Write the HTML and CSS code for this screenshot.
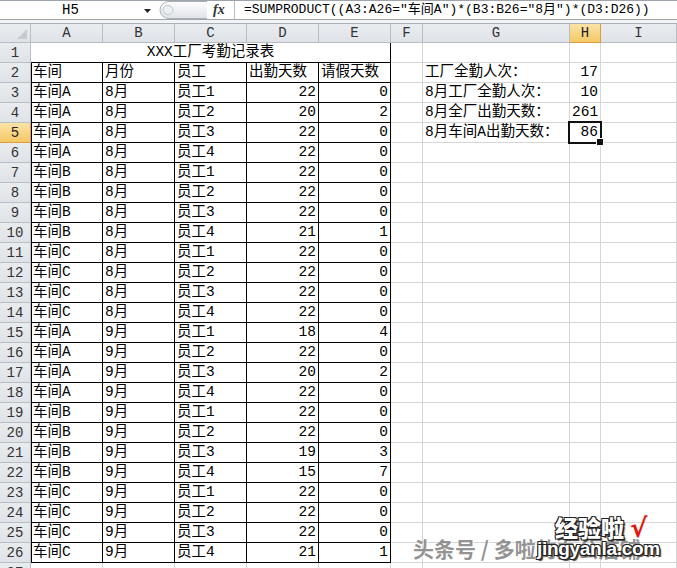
FILE: index.html
```html
<!DOCTYPE html>
<html lang="zh-CN">
<head>
<meta charset="utf-8">
<title>XXX工厂考勤记录表</title>
<link rel="stylesheet" href="styles.css">
</head>
<body>
<div class="fbar">
  <div class="namebox">H5</div>
  <svg class="nb-arrow" width="8" height="5" viewBox="0 0 8 5"><path d="M0 0H7L3.5 4Z" fill="#222"/></svg>
  <svg class="knob" width="50" height="18" viewBox="0 0 50 18">
    <defs><linearGradient id="kg" x1="0" y1="0" x2="0" y2="1"><stop offset="0" stop-color="#fdfdfe"/><stop offset="1" stop-color="#dfe3e8"/></linearGradient></defs>
    <path d="M50 0.5H12A9 8.5 0 0 0 12 17.5H50" fill="url(#kg)" stroke="#a9b0b8"/>
    <ellipse cx="11" cy="9" rx="5" ry="4.5" fill="#eceff2" stroke="#c3c8ce"/>
  </svg>
  <div class="fx">fx</div>
  <div class="formula">=SUMPRODUCT((A3:A26=″车间A″)*(B3:B26=″8月″)*(D3:D26))</div>
</div>
<div class="gap"></div>
<div class="sheet">
  <div class="corner"><span class="tri"></span></div>
  <div class="ch">A</div><div class="ch">B</div><div class="ch">C</div><div class="ch">D</div><div class="ch">E</div><div class="ch">F</div><div class="ch">G</div><div class="ch sel">H</div><div class="ch">I</div>

  <div class="rh">1</div><div class="c title">XXX工厂考勤记录表</div><div class="c"></div><div class="c"></div><div class="c"></div><div class="c"></div>
  <div class="rh">2</div><div class="c b bl">车间</div><div class="c b">月份</div><div class="c b">员工</div><div class="c b">出勤天数</div><div class="c b">请假天数</div><div class="c"></div><div class="c">工厂全勤人次：</div><div class="c n">17</div><div class="c"></div>
  <div class="rh">3</div><div class="c b bl">车间A</div><div class="c b">8月</div><div class="c b">员工1</div><div class="c b n">22</div><div class="c b n">0</div><div class="c"></div><div class="c">8月工厂全勤人次：</div><div class="c n">10</div><div class="c"></div>
  <div class="rh">4</div><div class="c b bl">车间A</div><div class="c b">8月</div><div class="c b">员工2</div><div class="c b n">20</div><div class="c b n">2</div><div class="c"></div><div class="c">8月全厂出勤天数：</div><div class="c n">261</div><div class="c"></div>
  <div class="rh sel">5</div><div class="c b bl">车间A</div><div class="c b">8月</div><div class="c b">员工3</div><div class="c b n">22</div><div class="c b n">0</div><div class="c"></div><div class="c">8月车间A出勤天数：</div><div class="c n active">86</div><div class="c"></div>
  <div class="rh">6</div><div class="c b bl">车间A</div><div class="c b">8月</div><div class="c b">员工4</div><div class="c b n">22</div><div class="c b n">0</div><div class="c"></div><div class="c"></div><div class="c"></div><div class="c"></div>
  <div class="rh">7</div><div class="c b bl">车间B</div><div class="c b">8月</div><div class="c b">员工1</div><div class="c b n">22</div><div class="c b n">0</div><div class="c"></div><div class="c"></div><div class="c"></div><div class="c"></div>
  <div class="rh">8</div><div class="c b bl">车间B</div><div class="c b">8月</div><div class="c b">员工2</div><div class="c b n">22</div><div class="c b n">0</div><div class="c"></div><div class="c"></div><div class="c"></div><div class="c"></div>
  <div class="rh">9</div><div class="c b bl">车间B</div><div class="c b">8月</div><div class="c b">员工3</div><div class="c b n">22</div><div class="c b n">0</div><div class="c"></div><div class="c"></div><div class="c"></div><div class="c"></div>
  <div class="rh">10</div><div class="c b bl">车间B</div><div class="c b">8月</div><div class="c b">员工4</div><div class="c b n">21</div><div class="c b n">1</div><div class="c"></div><div class="c"></div><div class="c"></div><div class="c"></div>
  <div class="rh">11</div><div class="c b bl">车间C</div><div class="c b">8月</div><div class="c b">员工1</div><div class="c b n">22</div><div class="c b n">0</div><div class="c"></div><div class="c"></div><div class="c"></div><div class="c"></div>
  <div class="rh">12</div><div class="c b bl">车间C</div><div class="c b">8月</div><div class="c b">员工2</div><div class="c b n">22</div><div class="c b n">0</div><div class="c"></div><div class="c"></div><div class="c"></div><div class="c"></div>
  <div class="rh">13</div><div class="c b bl">车间C</div><div class="c b">8月</div><div class="c b">员工3</div><div class="c b n">22</div><div class="c b n">0</div><div class="c"></div><div class="c"></div><div class="c"></div><div class="c"></div>
  <div class="rh">14</div><div class="c b bl">车间C</div><div class="c b">8月</div><div class="c b">员工4</div><div class="c b n">22</div><div class="c b n">0</div><div class="c"></div><div class="c"></div><div class="c"></div><div class="c"></div>
  <div class="rh">15</div><div class="c b bl">车间A</div><div class="c b">9月</div><div class="c b">员工1</div><div class="c b n">18</div><div class="c b n">4</div><div class="c"></div><div class="c"></div><div class="c"></div><div class="c"></div>
  <div class="rh">16</div><div class="c b bl">车间A</div><div class="c b">9月</div><div class="c b">员工2</div><div class="c b n">22</div><div class="c b n">0</div><div class="c"></div><div class="c"></div><div class="c"></div><div class="c"></div>
  <div class="rh">17</div><div class="c b bl">车间A</div><div class="c b">9月</div><div class="c b">员工3</div><div class="c b n">20</div><div class="c b n">2</div><div class="c"></div><div class="c"></div><div class="c"></div><div class="c"></div>
  <div class="rh">18</div><div class="c b bl">车间A</div><div class="c b">9月</div><div class="c b">员工4</div><div class="c b n">22</div><div class="c b n">0</div><div class="c"></div><div class="c"></div><div class="c"></div><div class="c"></div>
  <div class="rh">19</div><div class="c b bl">车间B</div><div class="c b">9月</div><div class="c b">员工1</div><div class="c b n">22</div><div class="c b n">0</div><div class="c"></div><div class="c"></div><div class="c"></div><div class="c"></div>
  <div class="rh">20</div><div class="c b bl">车间B</div><div class="c b">9月</div><div class="c b">员工2</div><div class="c b n">22</div><div class="c b n">0</div><div class="c"></div><div class="c"></div><div class="c"></div><div class="c"></div>
  <div class="rh">21</div><div class="c b bl">车间B</div><div class="c b">9月</div><div class="c b">员工3</div><div class="c b n">19</div><div class="c b n">3</div><div class="c"></div><div class="c"></div><div class="c"></div><div class="c"></div>
  <div class="rh">22</div><div class="c b bl">车间B</div><div class="c b">9月</div><div class="c b">员工4</div><div class="c b n">15</div><div class="c b n">7</div><div class="c"></div><div class="c"></div><div class="c"></div><div class="c"></div>
  <div class="rh">23</div><div class="c b bl">车间C</div><div class="c b">9月</div><div class="c b">员工1</div><div class="c b n">22</div><div class="c b n">0</div><div class="c"></div><div class="c"></div><div class="c"></div><div class="c"></div>
  <div class="rh">24</div><div class="c b bl">车间C</div><div class="c b">9月</div><div class="c b">员工2</div><div class="c b n">22</div><div class="c b n">0</div><div class="c"></div><div class="c"></div><div class="c"></div><div class="c"></div>
  <div class="rh">25</div><div class="c b bl">车间C</div><div class="c b">9月</div><div class="c b">员工3</div><div class="c b n">22</div><div class="c b n">0</div><div class="c"></div><div class="c"></div><div class="c"></div><div class="c"></div>
  <div class="rh">26</div><div class="c b bl">车间C</div><div class="c b">9月</div><div class="c b">员工4</div><div class="c b n">21</div><div class="c b n">1</div><div class="c"></div><div class="c"></div><div class="c"></div><div class="c"></div>
  <div class="rh">27</div><div class="c"></div><div class="c"></div><div class="c"></div><div class="c"></div><div class="c"></div><div class="c"></div><div class="c"></div><div class="c"></div><div class="c"></div>
</div>
<div class="watermark">
  <div class="wm-gray">头条号 / 多啦的办公店铺</div>
  <div class="wm-logo">经验啦<span class="wm-check">√</span></div>
  <div class="wm-url">jingyanla.com</div>
</div>
</body>
</html>
```
FILE: styles.css
```css
* { box-sizing: border-box; }
html, body { margin: 0; padding: 0; background: #fff; }
body {
  width: 677px;
  height: 568px;
  overflow: hidden;
  position: relative;
  font-family: "Liberation Mono", "Noto Sans CJK SC", monospace;
  color: #000;
}

/* formula bar */
.fbar {
  display: flex;
  align-items: center;
  height: 20px;
  border-top: 1px solid #9ea4ab;
  border-bottom: 1px solid #9ea4ab;
  background: #fff;
}
.namebox {
  width: 141px;
  text-align: center;
  font-size: 14px;
  line-height: 18px;
}
.nb-arrow { margin-left: 3px; margin-top: 2px; }
.knob { margin-left: 5px; align-self: flex-start; }
.fx {
  width: 28px;
  height: 18px;
  padding-left: 6px;
  font-family: "Liberation Serif", serif;
  font-style: italic;
  font-weight: bold;
  font-size: 14px;
  line-height: 18px;
  color: #333;
  border-right: 1px solid #b7bcc2;
}
.formula {
  padding-left: 9px;
  font-size: 13px;
  line-height: 18px;
  white-space: nowrap;
}
.gap { height: 3px; background: #f2f3f5; }

/* sheet */
.sheet {
  display: grid;
  grid-template-columns: 31px 72px 72px 72px 72px 72px 32px 147px 31px 76px;
  grid-template-rows: 19px;
  grid-auto-rows: 20px;
  border-top: 1px solid #aab0b7;
}
.corner, .ch, .rh {
  background: linear-gradient(#e9ecef, #dfe3e7);
  border-right: 1px solid #b9bec4;
  border-bottom: 1px solid #b9bec4;
  color: #333;
  font-size: 14px;
  text-align: center;
}
.ch { line-height: 18px; }
.rh { line-height: 20px; font-size: 14px; }
.corner { position: relative; }
.tri {
  position: absolute;
  right: 3px;
  bottom: 3px;
  width: 0;
  height: 0;
  border-left: 10px solid transparent;
  border-bottom: 10px solid #c6cbd1;
}
.ch.sel, .rh.sel {
  background: linear-gradient(#fbe3a6, #f4c865);
  border-color: #e29c3a;
  color: #222;
}

.c {
  border-right: 1px solid #d6d6d6;
  border-bottom: 1px solid #d6d6d6;
  font-size: 14.5px;
  line-height: 19px;
  padding: 0 2px;
  white-space: nowrap;
  overflow: visible;
}
.c.n { text-align: right; }
.c.b { border-right-color: #000; border-bottom-color: #000; }
.c.bl { box-shadow: inset 1px 0 0 #000; }
.c.title {
  grid-column: span 5;
  text-align: center;
  border-right-color: #000;
  border-bottom-color: #000;
}
.c.active { position: relative; }
.c.active::before {
  content: "";
  position: absolute;
  left: -2px;
  top: -2px;
  right: -2px;
  bottom: -2px;
  border: 2px solid #111;
}
.c.active::after {
  content: "";
  position: absolute;
  right: -4px;
  bottom: -4px;
  width: 6px;
  height: 6px;
  background: #111;
  border: 1px solid #fff;
}

/* watermark overlay */
.watermark { position: absolute; left: 0; top: 0; width: 677px; height: 568px; pointer-events: none; }
.wm-gray {
  position: absolute;
  left: 413px;
  top: 535px;
  font-family: "Noto Sans CJK SC", sans-serif;
  font-size: 21px;
  font-weight: bold;
  line-height: 26px;
  color: rgba(128, 128, 128, 0.85);
  text-shadow: 1px 1px 0 rgba(255,255,255,0.8);
  white-space: nowrap;
}
.wm-logo {
  position: absolute;
  left: 555px;
  top: 512px;
  font-family: "Noto Sans CJK SC", sans-serif;
  font-size: 23px;
  font-weight: 900;
  line-height: 30px;
  color: #fff;
  white-space: nowrap;
  text-shadow: -1px -1px 0 #222, 1px -1px 0 #222, -1px 1px 0 #222, 1px 1px 0 #222, 2px 2px 1px #444;
}
.wm-check {
  margin-left: 6px;
  color: #e4140f;
  font-family: "DejaVu Sans", sans-serif;
  font-weight: bold;
  font-size: 26px;
  text-shadow: none;
}
.wm-url {
  position: absolute;
  left: 537px;
  top: 538px;
  font-family: "Liberation Sans", Arial, sans-serif;
  font-size: 19px;
  font-weight: bold;
  line-height: 22px;
  letter-spacing: -0.3px;
  color: #fff;
  white-space: nowrap;
  text-shadow: -1px -1px 0 #222, 1px -1px 0 #222, -1px 1px 0 #222, 1px 1px 0 #222, 2px 2px 1px #444;
}
```
